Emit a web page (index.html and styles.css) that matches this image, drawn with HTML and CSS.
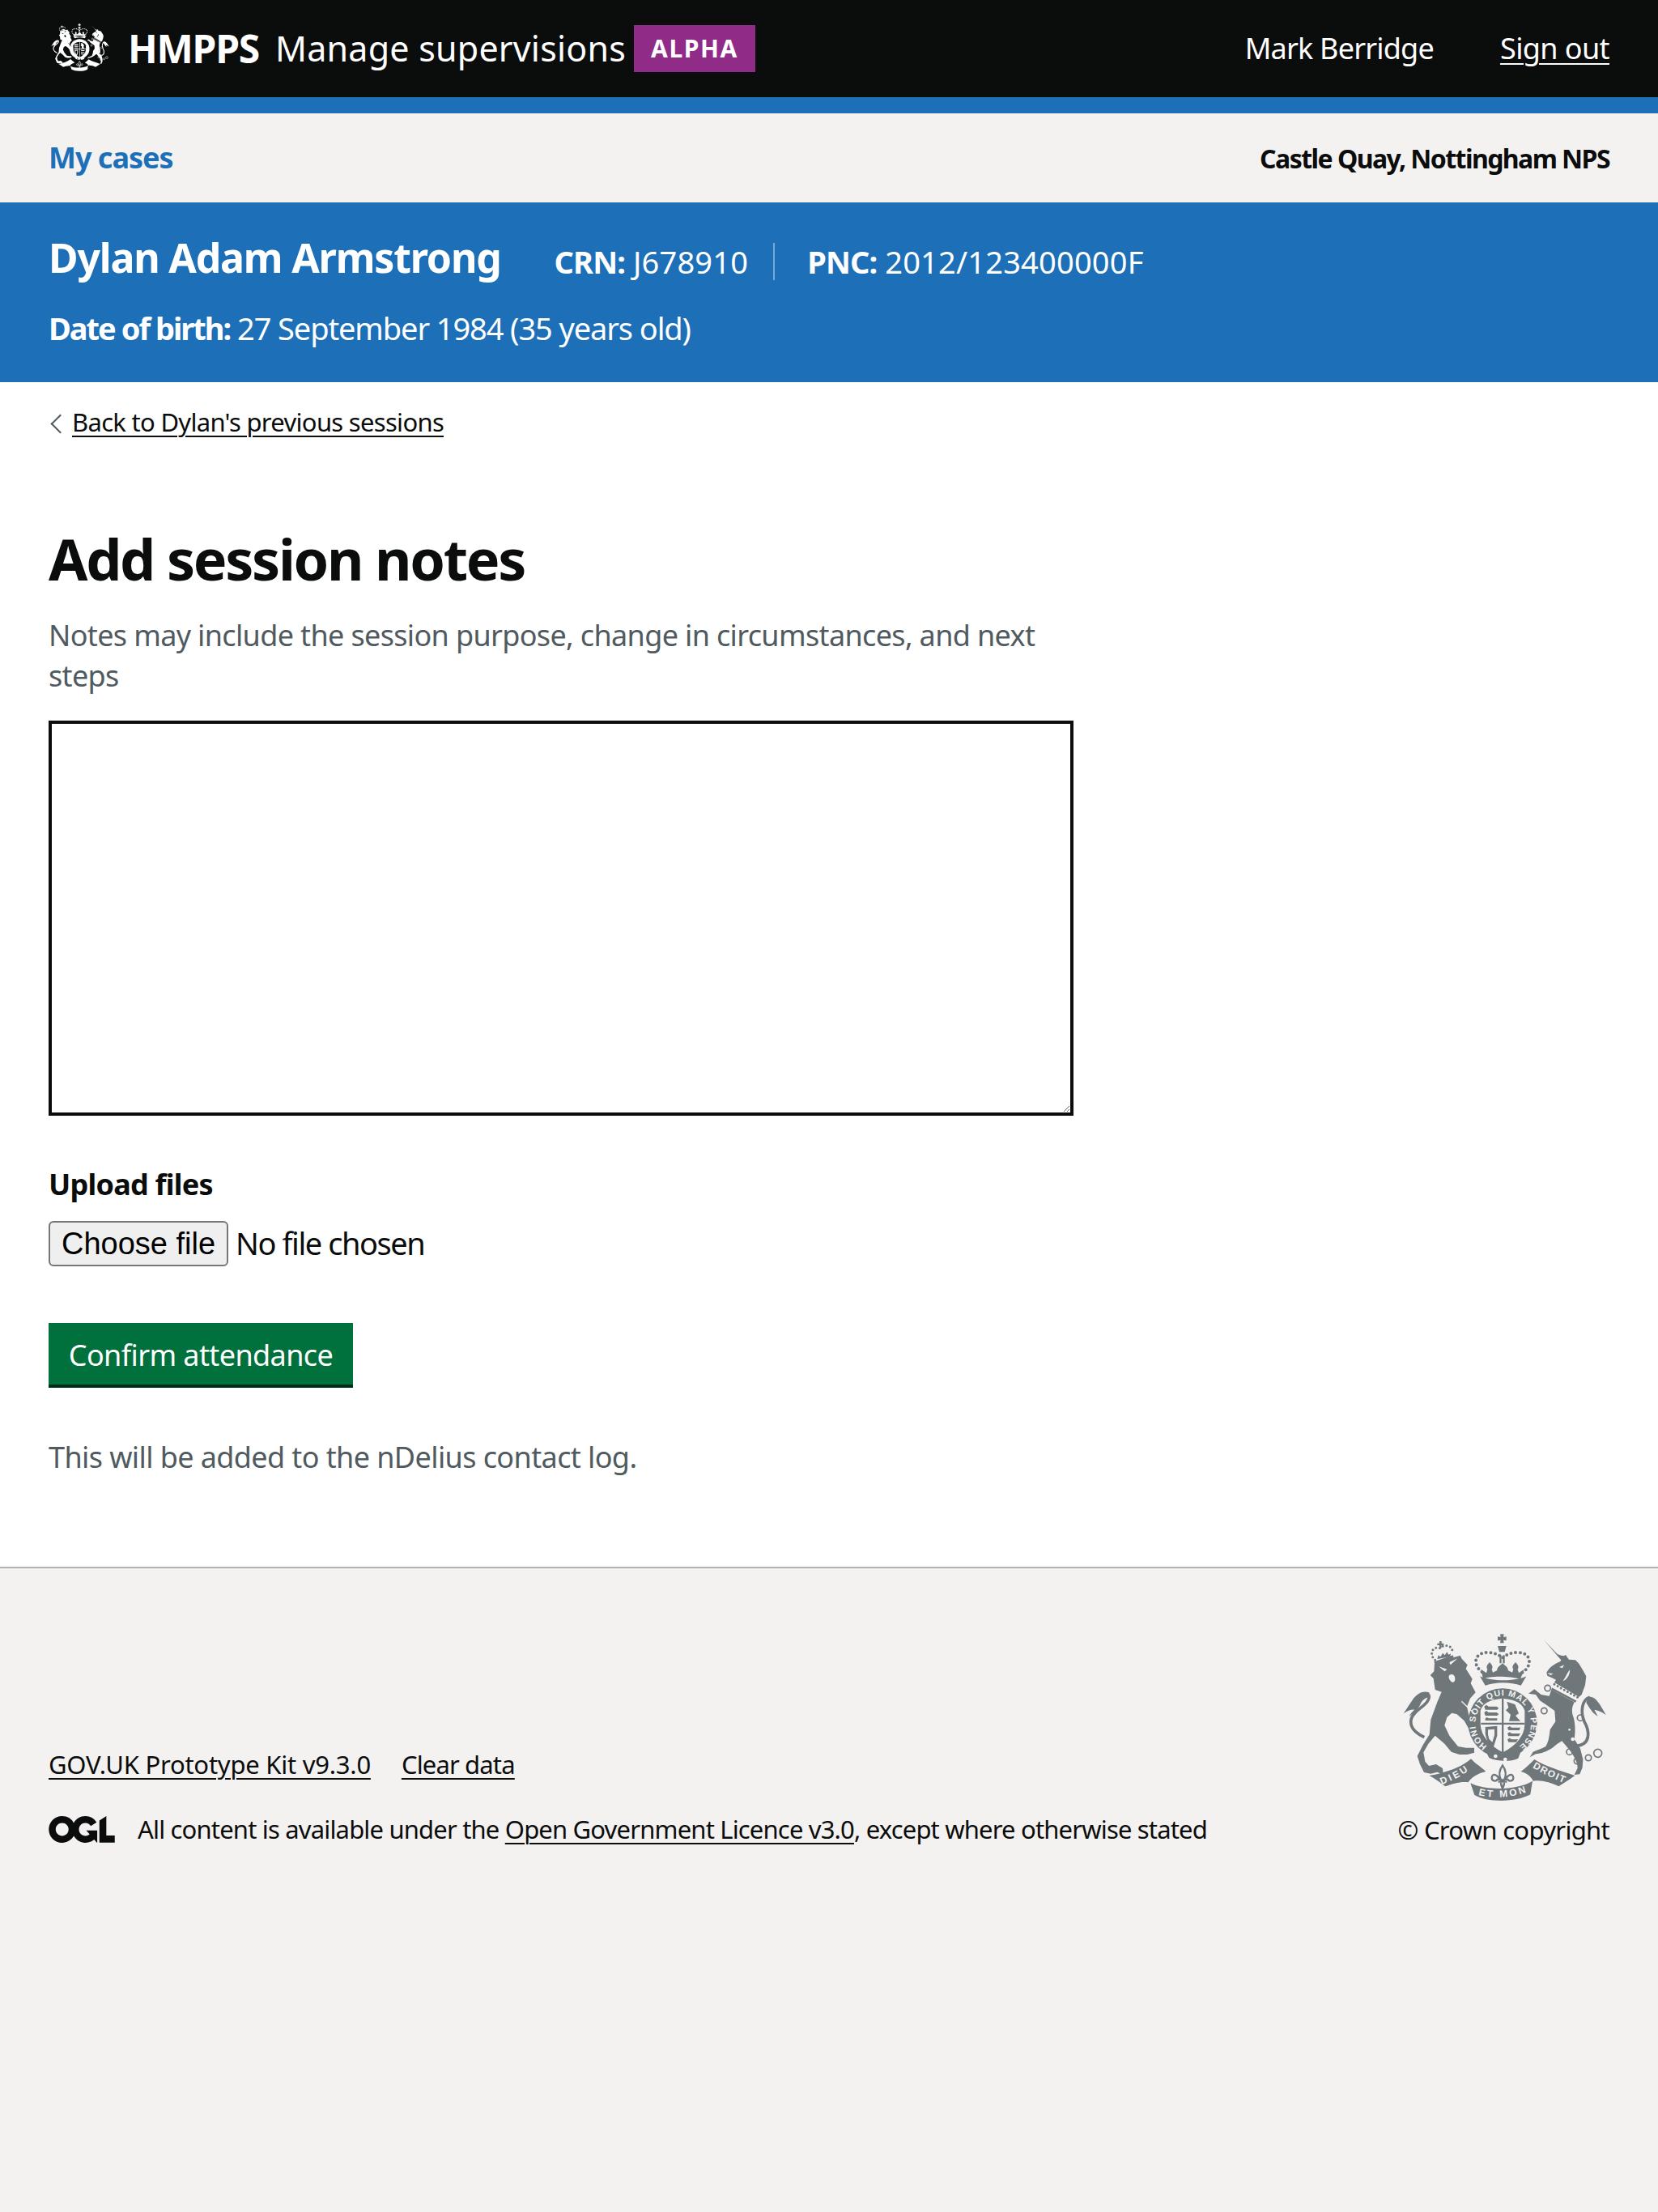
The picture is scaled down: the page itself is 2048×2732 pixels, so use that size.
FILE: index.html
```html
<!DOCTYPE html>
<html lang="en">
<head>
<meta charset="utf-8">
<title>Add session notes</title>
<link rel="stylesheet" href="styles.css">
</head>
<body>
<svg class="defs" width="0" height="0" aria-hidden="true">
  <symbol id="arms" viewBox="0 0 840 660">
    <!-- royal crown -->
    <path class="ink" d="M393 16h14l-2 11 11-2v15l-11-2 2 11h-14l2-11-11 2V25l11 2z"/>
    <path class="ink" d="M384 60h32l-6 22h-20z"/>
    <path class="ink" d="M391 94h7v30h-7zM403 94h7v30h-7z"/>
    <path class="beads" d="M340 165C288 140 292 84 345 84c30 0 45 10 57 20 12-10 27-20 57-20 53 0 57 56 5 81"/>
    <path class="ink" d="M322 146l20 14 4-14c-6-8-2-16 8-26 10 10 14 18 8 26l4 12 16-8c-2-8 8-16 20-26 12 10 22 18 20 26l16 8 4-12c-6-8-2-16 8-26 10 10 14 18 8 26l4 14 20-14-14 36c-40-12-118-12-138 0z"/>
    <path class="ink" d="M318 172c45 20 130 20 172 0l-20 34c-38-14-94-14-132 0z"/>
    <!-- garter -->
    <circle class="ink" cx="402" cy="345" r="128"/>
    <path class="cut" d="M320 300q10-40 82-46 72 6 82 46v50q-2 62-81 104-79-42-83-104z"/>
    <path class="ink" d="M399 254h7v200h-7zM322 344h162v7H322z"/>
    <path class="ink" d="M334 284l8-6 8 6h30l8 6-6 6h-44zM334 306l8-6 8 6h30l8 6-6 6h-44zM338 328l6-4 6 4h32v8h-44z"/>
    <path class="ink" d="M418 266l30 10 14 34-12 8 18 20h-42l6-24-18-16 10-10z"/>
    <path class="ink" d="M338 360l44-4v36l-14 44-22-22-8-28zM420 362l8-5 8 5h32l-4 10h-40zM420 384l8-5 8 5h32l-6 10h-38zM420 406l8-5 8 5h24l-8 10h-28z"/>
    <path class="cut" d="M348 370l24-2v22l-8 26-12-12-4-16z"/>
    <path class="ink" d="M340 450c25 18 100 28 130 0l-10 26c-30 14-80 12-108-2z"/>
    <circle class="cut" cx="376" cy="468" r="7"/><circle class="cut" cx="412" cy="480" r="7"/>
    <!-- lion -->
    <path class="ink" d="M150 122l95-27 6 12 21 23-6 14 24 38-6 16 18 34-20 22-12 30 8 36 26 26 1 18-9 7-20-6-16-28-27-24-19-5-18 16-9 30 18 38 32 40 30 5h30v18l-25 7h-30l-30-10-25-30-35-30-25 30-18 32 6 34 14 16 27-6 24 15 2 24-22-10-24 6-25-5-15-30-10-30 20-40 25-40 5-55 24-65 16-38-24-8-6-42-12-12 14-14z"/>
    <path class="cut" d="M166 136l30 10-8 8zM235 106l-30 14 4 10zM204 168c10-6 22-2 22 14 0 10-8 16-14 10-6-6-12-14-8-24z"/>
    <path class="ink" d="M188 154l32-4-6 14-18 4z"/>
    <path class="cutline" d="M250 265l50 48"/>
    <path class="tail" d="M128 240c10 25-28 45-48 65-30 30-25 65 32 93"/>
    <path class="ink" d="M130 232c-25-10-50 8-62 28-13 18-23 35-33 50 15-10 27-15 40-14-10 9-15 16-20 26 20-17 35-27 45-52 10-15 22-22 33-20z"/>
    <!-- lion crown -->
    <path class="beads small" d="M152 112c-24-22-10-54 20-44 10-16 48-14 44 18"/>
    <path class="ink" d="M168 42h8v8h8v7h-8v10h-8V57h-8v-7h8z"/>
    <path class="ink" d="M160 108l4-14 8 6 8-14 8 8 8-12 6 10 8-4-2 12z"/>
    <path class="ink" d="M148 118l70-24 3 9-70 24z"/>
    <!-- unicorn -->
    <path class="ink" d="M553 35l47 50q15 15 40 10l-20 18z"/>
    <path class="ink" d="M565 158c10-18 30-33 50-40l20-26 13 18 24 2 13 13 15 25 12 22-4 33-13 35-23 22c-12 18-17 38-7 63 7 25 7 55 3 80l22 35 10 40-2 30-10 25-20 2 12-25c0-22-15-47-30-67l-28-33c-12 8-22 13-32 23-25 17-45 23-65 25l-22 12 12-20c15-7 35-12 47-20 13-22 13-42 16-62l20-30-3-40-25-18-30-20-15-22-27-4 22-16 25 20 30 5 15-45 10-15-15-7-17-8z"/>
    <path class="cut" d="M652 148c-2 22-12 37-27 42 15-20 15-30 27-42zM612 138l18-8-6 12zM568 160l22 2-10 6z"/>
    <path class="cut" d="M590 193l97 57-15 20-92-50z"/>
    <path class="collar" d="M584 218l90 48"/>
    <path class="beads small" d="M594 202l86 48"/>
    <path class="tail" d="M675 430c55-5 50-55 30-90-15-35-10-80 20-90"/>
    <path class="ink" d="M720 248c25-3 40 22 65 67-20-15-35-17-43-19l13 24c-20-10-30-30-43-50z"/>
    <circle class="ring" cx="569" cy="216" r="11"/>
    <circle class="ring" cx="556" cy="300" r="11"/>
    <circle class="ring" cx="690" cy="326" r="11"/>
    <circle class="ring" cx="650" cy="452" r="11"/>
    <circle class="ring" cx="678" cy="486" r="11"/>
    <circle class="ring" cx="720" cy="474" r="11"/>
    <circle class="ring" cx="755" cy="457" r="15"/>
    <circle class="cut" cx="680" cy="372" r="8"/><circle class="cut" cx="662" cy="405" r="7"/><circle class="cut" cx="650" cy="370" r="4"/>
    <!-- motto ribbon -->
    <path class="ink" d="M130 540c60-10 120-30 155-62 15 17 40 32 55 47-20 5-50 15-65 40-25-5-60 5-85 15-20-15-40-30-60-40z"/>
    <path class="ink" d="M283 568c55 28 170 28 230-8l-8 50c-55 30-160 30-207 2z"/>
    <path class="ink" d="M470 525c20-15 35-30 50-45 40 25 90 40 150 60-20 15-45 30-60 40-30-15-65-25-95-20-5-15-25-30-45-35z"/>
    <path class="fleur" d="M402 502c-14 20-14 38-6 54h12c8-16 8-34-6-54zM390 558c-5-23-28-28-28-10 0 12 16 17 22 4M414 558c5-23 28-28 28-10 0 12-16 17-22 4M386 563h32M396 567c0 11 6 17 6 23 0-6 6-12 6-23"/>
  </symbol>
</svg>

<header class="top">
  <div class="top-brand">
    <svg class="top-crest" viewBox="0 0 840 660" aria-hidden="true"><use href="#arms"/></svg>
    <span class="top-hmpps">HMPPS</span>
    <span class="top-service">Manage supervisions</span>
    <strong class="tag">ALPHA</strong>
  </div>
  <nav class="top-nav">
    <span class="top-user">Mark Berridge</span>
    <a href="#">Sign out</a>
  </nav>
</header>
<div class="rule"></div>

<div class="subnav">
  <a class="subnav-link" href="#">My cases</a>
  <span class="subnav-office">Castle Quay, Nottingham NPS</span>
</div>

<section class="banner">
  <div class="banner-top">
    <h2 class="banner-name">Dylan Adam Armstrong</h2>
    <p class="banner-id banner-id-first"><b>CRN:</b> J678910</p>
    <p class="banner-id"><b>PNC:</b> 2012/123400000F</p>
  </div>
  <p class="banner-dob"><b>Date of birth:</b> 27 September 1984 (35 years old)</p>
</section>

<main class="main">
  <a class="back" href="#">Back to Dylan's previous sessions</a>
  <h1 class="title">Add session notes</h1>
  <form class="form">
    <p class="hint">Notes may include the session purpose, change in circumstances, and next steps</p>
    <textarea class="notes" aria-label="Add session notes"></textarea>
    <label class="label" for="files">Upload files</label>
    <div class="file-row">
      <input class="file" id="files" type="file">
      <label class="file-button" for="files">Choose file</label>
      <span class="file-name">No file chosen</span>
    </div>
    <button class="button" type="button">Confirm attendance</button>
    <p class="note">This will be added to the nDelius contact log.</p>
  </form>
</main>

<footer class="footer">
  <div class="footer-meta">
    <div class="footer-links">
      <a href="#">GOV.UK Prototype Kit v9.3.0</a>
      <a class="footer-clear" href="#">Clear data</a>
    </div>
    <div class="footer-licence">
      <svg class="ogl" viewBox="0 0 483.2 195.7" aria-hidden="true"><path d="M421.5 142.8V.1l-50.7 32.3v161.1h112.4v-50.7zm-122.3-9.6A47.12 47.12 0 0 1 221 97.8c0-26 21.1-47.1 47.1-47.1 16.7 0 31.4 8.7 39.7 21.8l42.7-27.2A97.63 97.63 0 0 0 268.1 0c-36.5 0-68.3 20.1-85.1 49.7A98 98 0 0 0 97.8 0C43.9 0 0 43.9 0 97.8s43.9 97.8 97.8 97.8c36.5 0 68.3-20.1 85.1-49.7a97.76 97.76 0 0 0 149.6 25.4l19.4 22.2h3v-87.8h-80l24.3 27.5zM97.8 145c-26 0-47.1-21.1-47.1-47.1s21.1-47.1 47.1-47.1 47.2 21 47.2 47S123.8 145 97.8 145"/></svg>
      <span>All content is available under the <a href="#">Open Government Licence v3.0</a>, except where otherwise stated</span>
    </div>
  </div>
  <div class="footer-crown">
    <svg class="crest" viewBox="0 0 840 660" aria-hidden="true">
      <use href="#arms"/>
      <defs>
        <path id="garter-arc" d="M345 431A103 103 0 1 1 456 436"/>
        <path id="dieu-arc" d="M176 574C215 558 255 540 284 514"/>
        <path id="etmon-arc" d="M312 612C360 626 440 622 494 600"/>
        <path id="droit-arc" d="M512 510C555 535 600 555 640 572"/>
      </defs>
      <text class="crest-text garter"><textPath href="#garter-arc" textLength="520">HONI SOIT QUI MAL Y PENSE</textPath></text>
      <text class="crest-text motto"><textPath href="#dieu-arc" textLength="112">DIEU</textPath></text>
      <text class="crest-text motto"><textPath href="#etmon-arc" textLength="180">ET MON</textPath></text>
      <text class="crest-text motto"><textPath href="#droit-arc" textLength="130">DROIT</textPath></text>
    </svg>
    <span class="copyright">© Crown copyright</span>
  </div>
</footer>
</body>
</html>
```

FILE: styles.css
```css
* { box-sizing: border-box; }
html, body { margin: 0; padding: 0; }
body {
  min-height: 2732px;
  display: flex;
  flex-direction: column;
  background: #f3f2f1;
  color: #0b0c0c;
  font-family: "Noto Sans", "Liberation Sans", sans-serif;
  font-size: 36px;
  line-height: 50px;
  letter-spacing: -.6px;
}
a { color: inherit; text-decoration-thickness: 2px; text-underline-offset: 5px; }
p, h1, h2 { margin: 0; }
.defs { position: absolute; }

.ink { fill: currentColor; }
.cut { fill: var(--cut); }
.cutline { fill: none; stroke: var(--cut); stroke-width: 4; }
.collar { fill: none; stroke: currentColor; stroke-width: 8; }
.beads { fill: none; stroke: currentColor; stroke-width: 12; stroke-linecap: round; stroke-dasharray: 0 17; }
.beads.small { stroke-width: 9; stroke-dasharray: 0 14; }
.tail { fill: none; stroke: currentColor; stroke-width: 11; }
.ring { fill: none; stroke: currentColor; stroke-width: 5; }
.fleur { fill: none; stroke: currentColor; stroke-width: 7; }

.top {
  height: 120px;
  background: #0b0c0c;
  color: #fff;
  padding: 0 60px;
  display: flex;
  align-items: center;
  justify-content: space-between;
}
.top-brand { display: flex; align-items: center; }
.top-crest { width: 80px; height: 68px; margin-top: -2px; margin-right: 18px; --cut: #0b0c0c; color: #fff; }
.top-hmpps { font-weight: 700; font-size: 48px; margin-right: 20px; letter-spacing: -1.2px; }
.top-service { font-size: 43px; letter-spacing: .2px; }
.tag {
  margin-left: 10px;
  width: 150px;
  height: 58px;
  background: #912b88;
  display: flex;
  align-items: center;
  justify-content: center;
  font-size: 30px;
  letter-spacing: 1.6px;
}
.top-nav { display: flex; gap: 82px; }
.top-user { letter-spacing: -.8px; }

.rule { height: 20px; background: #1d70b8; }

.subnav {
  height: 110px;
  padding: 0 60px;
  display: flex;
  align-items: center;
  justify-content: space-between;
}
.subnav-link { color: #1d70b8; font-weight: 700; font-size: 36px; letter-spacing: -1px; text-decoration: none; }
.subnav-office { font-weight: 700; font-size: 32px; letter-spacing: -1.55px; padding-top: 2px; }

.banner {
  height: 222px;
  background: #1d70b8;
  color: #fff;
  padding: 38px 60px 0;
}
.banner-top { display: flex; align-items: center; }
.banner-name { font-size: 50px; line-height: 60px; font-weight: 700; letter-spacing: -1.2px; margin-right: 66px; }
.banner-id { margin-top: 10px; font-size: 38px; letter-spacing: .2px; line-height: 46px; }
.banner-id b, .banner-dob b { letter-spacing: -.9px; }
.banner-id-first { border-right: 2px solid rgba(255, 255, 255, .4); margin-right: 40px; padding-right: 31px; }
.banner-dob { margin-top: 32px; font-size: 38px; letter-spacing: -1.1px; }
.banner-dob b { letter-spacing: -2px; }

.main { background: #fff; padding: 23px 60px 110px; }
.back {
  display: inline-block;
  position: relative;
  padding-left: 29px;
  font-size: 31px;
  line-height: 44px;
  letter-spacing: -.7px;
}
.back::before {
  content: "";
  position: absolute;
  left: 6px;
  top: 16px;
  width: 15px;
  height: 15px;
  border-left: 2px solid #505a5f;
  border-bottom: 2px solid #505a5f;
  transform: rotate(45deg);
}
.title { margin-top: 105px; font-size: 70px; line-height: 80px; font-weight: 700; letter-spacing: -2.3px; }
.form { display: flex; flex-direction: column; align-items: flex-start; }
.hint { margin-top: 30px; width: 1266px; color: #505a5f; letter-spacing: -.65px; }
.notes {
  display: block;
  margin-top: 30px;
  width: 1266px;
  height: 488px;
  border: 4px solid #0b0c0c;
  background: #fff;
  border-radius: 0;
}
.label { margin-top: 60px; font-weight: 700; line-height: 50px; letter-spacing: -.75px; }
.file-row { margin-top: 20px; height: 56px; display: flex; align-items: center; gap: 9px; }
.file { display: none; }
.file-button {
  width: 222px;
  height: 56px;
  display: flex;
  align-items: center;
  justify-content: center;
  font-family: "Liberation Sans", sans-serif;
  font-size: 38px;
  letter-spacing: 0;
  background: #efefef;
  border: 2px solid #767676;
  border-radius: 6px;
  color: #000;
}
.file-name { font-size: 38px; letter-spacing: -1.45px; color: #0b0c0c; margin-top: -2px; }
.button {
  margin-top: 70px;
  width: 376px;
  height: 80px;
  padding: 0;
  border: 0;
  border-radius: 0;
  background: #00703c;
  box-shadow: inset 0 -4px 0 #002d18;
  color: #fff;
  font: inherit;
  letter-spacing: inherit;
}
.note { margin-top: 61px; color: #505a5f; }

.footer {
  flex: 1;
  border-top: 2px solid #b1b4b6;
  padding: 76px 60px 0;
  display: flex;
  justify-content: space-between;
  align-items: flex-start;
  font-size: 31px;
  line-height: 40px;
  letter-spacing: -.24px;
}
.footer-meta { margin-top: 146px; }
.footer-links { display: flex; gap: 38px; }
.footer-clear { letter-spacing: -.85px; }
.footer-licence { display: flex; align-items: center; gap: 28px; margin-top: 40px; letter-spacing: -.83px; }
.ogl { width: 82px; height: 33px; fill: #0b0c0c; }
.footer-crown { display: flex; flex-direction: column; align-items: flex-end; letter-spacing: -.7px; }
.crest { display: block; width: 280px; height: 220px; margin-right: -14px; color: #6f777b; --cut: #f3f2f1; }
.copyright { margin-top: 7px; }
.crest-text { fill: #f3f2f1; font-family: "Liberation Sans", sans-serif; font-weight: 700; letter-spacing: 0; }
.garter { font-size: 32px; }
.motto { font-size: 36px; }
```
